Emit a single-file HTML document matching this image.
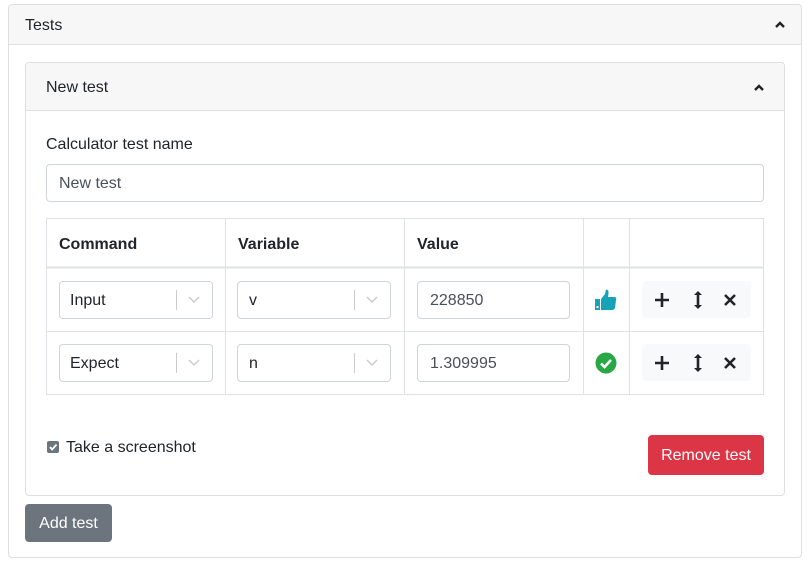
<!DOCTYPE html>
<html><head><style>
*{box-sizing:border-box;margin:0;padding:0}
body{width:808px;height:563px;background:#fff;font-family:"Liberation Sans",sans-serif;color:#212529;font-size:16px;position:relative;overflow:hidden}
.a{position:absolute}
.box{position:absolute;border:1px solid #ced4da;border-radius:4px;background:#fff}
.t{position:absolute;white-space:nowrap;margin-top:1px}
.sel .sep{position:absolute;top:8px;width:1px;height:20px;background:#ccc}
.btng{position:absolute;background:#f8f9fa;border-radius:4px;width:109px;height:37px}
</style></head><body>
<div class="a" style="left:8px;top:4px;width:794px;height:554px;border:1px solid #dfdfdf;border-radius:4px"></div>
<div class="a" style="left:9px;top:5px;width:792px;height:40px;background:#f7f7f7;border-bottom:1px solid #dfdfdf;border-radius:4px 4px 0 0"></div>
<div class="t" style="left:25px;top:16px">Tests</div>
<svg class="a" style="left:774px;top:20px" width="12" height="9" viewBox="0 0 12 9"><path d="M2 7L6 3L10 7" stroke="#222" stroke-width="2.4" fill="none"/></svg>

<div class="a" style="left:25px;top:62px;width:760px;height:434px;border:1px solid #dfdfdf;border-radius:4px"></div>
<div class="a" style="left:26px;top:63px;width:758px;height:48px;background:#f7f7f7;border-bottom:1px solid #dfdfdf;border-radius:4px 4px 0 0"></div>
<div class="t" style="left:46px;top:78px">New test</div>
<svg class="a" style="left:753px;top:83px" width="12" height="9" viewBox="0 0 12 9"><path d="M2 7L6 3L10 7" stroke="#222" stroke-width="2.4" fill="none"/></svg>

<div class="t" style="left:46px;top:135px">Calculator test name</div>
<div class="box" style="left:46px;top:164px;width:718px;height:38px"></div>
<div class="t" style="left:59px;top:174px;color:#495057">New test</div>

<svg class="a" style="left:46px;top:218px" width="719" height="178">
<g stroke="#dee2e6" stroke-width="1" fill="none">
<rect x="0.5" y="0.5" width="717" height="176"/>
<line x1="0" y1="49.5" x2="718" y2="49.5" stroke-width="2"/>
<line x1="0" y1="113.5" x2="718" y2="113.5"/>
<line x1="179.5" y1="0" x2="179.5" y2="177"/>
<line x1="358.5" y1="0" x2="358.5" y2="177"/>
<line x1="537.5" y1="0" x2="537.5" y2="177"/>
<line x1="583.5" y1="0" x2="583.5" y2="177"/>
</g></svg>
<div class="t" style="left:59px;top:235px;font-weight:bold">Command</div>
<div class="t" style="left:238px;top:235px;font-weight:bold">Variable</div>
<div class="t" style="left:417px;top:235px;font-weight:bold">Value</div>

<div class="box sel" style="left:59px;top:281px;width:154px;height:38px"><span class="t" style="left:10px;top:9px">Input</span><div class="sep" style="left:116px"></div><svg class="a" style="left:128px;top:14px" width="12" height="8"><path d="M1 1L6 6L11 1" stroke="#ccc" stroke-width="1.5" fill="none"/></svg></div>
<div class="box sel" style="left:237px;top:281px;width:154px;height:38px"><span class="t" style="left:11px;top:9px">v</span><div class="sep" style="left:116px"></div><svg class="a" style="left:128px;top:14px" width="12" height="8"><path d="M1 1L6 6L11 1" stroke="#ccc" stroke-width="1.5" fill="none"/></svg></div>
<div class="box" style="left:417px;top:281px;width:153px;height:38px"><span class="t" style="left:12px;top:9px;color:#495057">228850</span></div>
<svg class="a" style="left:594px;top:288px" width="24" height="24" viewBox="0 0 24 24"><rect x="1" y="11" width="5" height="11" fill="#17a2b8"/><rect x="2.5" y="18" width="2" height="2" fill="#fff"/><path d="M7 11L11 6L12 1.5Q15 1.5 14.5 6L14 9L21 9Q23 10 22 12L21 20Q20 22 18 22L7 22Z" fill="#17a2b8"/></svg>
<div class="btng" style="left:642px;top:281px"></div>
<div class="box sel" style="left:59px;top:344px;width:154px;height:38px"><span class="t" style="left:10px;top:9px">Expect</span><div class="sep" style="left:116px"></div><svg class="a" style="left:128px;top:14px" width="12" height="8"><path d="M1 1L6 6L11 1" stroke="#ccc" stroke-width="1.5" fill="none"/></svg></div>
<div class="box sel" style="left:237px;top:344px;width:154px;height:38px"><span class="t" style="left:11px;top:9px">n</span><div class="sep" style="left:116px"></div><svg class="a" style="left:128px;top:14px" width="12" height="8"><path d="M1 1L6 6L11 1" stroke="#ccc" stroke-width="1.5" fill="none"/></svg></div>
<div class="box" style="left:417px;top:344px;width:153px;height:38px"><span class="t" style="left:12px;top:9px;color:#495057">1.309995</span></div>
<svg class="a" style="left:595px;top:352px" width="22" height="22" viewBox="0 0 22 22"><circle cx="11" cy="11" r="10.5" fill="#28a745"/><path d="M6 11.5L9.5 15L16 8" stroke="#fff" stroke-width="2.6" fill="none"/></svg>
<div class="btng" style="left:642px;top:344px"></div>

<svg class="a" style="left:642px;top:281px" width="109" height="101">
<g stroke="#212529" stroke-width="2.6" fill="none">
<path d="M20 12V26M13 19H27"/><path d="M56 12V26"/><path d="M83 14L93 24M93 14L83 24"/>
<path d="M20 75V89M13 82H27"/><path d="M56 75V89"/><path d="M83 77L93 87M93 77L83 87"/>
</g>
<g fill="#212529"><path d="M52 14L56 10L60 14Z"/><path d="M52 24L56 28L60 24Z"/><path d="M52 77L56 73L60 77Z"/><path d="M52 87L56 91L60 87Z"/></g>
</svg>

<div class="a" style="left:47px;top:441px;width:12px;height:12px;background:#6c757d;border-radius:2px"></div>
<svg class="a" style="left:47px;top:441px" width="12" height="12"><path d="M3 6L5.2 8.5L9.5 3.5" stroke="#fff" stroke-width="1.8" fill="none"/></svg>
<div class="t" style="left:66px;top:438px">Take a screenshot</div>

<div class="a" style="left:648px;top:435px;width:116px;height:40px;background:#dc3545;border-radius:4px;color:#fff;text-align:center;line-height:41px">Remove test</div>
<div class="a" style="left:25px;top:504px;width:87px;height:38px;background:#6c757d;border-radius:4px;color:#fff;text-align:center;line-height:39px">Add test</div>
</body></html>
